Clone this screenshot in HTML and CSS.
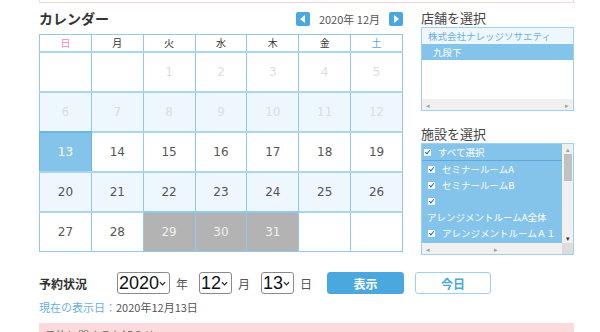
FILE: index.html
```html
<!DOCTYPE html>
<html lang="ja">
<head>
  <meta charset="UTF-8" />
  <meta name="viewport" content="width=device-width, initial-scale=1" />
  <title>予約状況</title>
  <link rel="stylesheet" href="styles.css">
</head>
<body>
  <div class="page">
    <div class="top-notice"></div>

    <div class="main">
      <div class="calendar">
        <div class="cal-head">
          <h2>カレンダー</h2>
          <div class="month-nav">
            <span class="nav-btn prev"></span>
            <span class="month-label">2020年 12月</span>
            <span class="nav-btn next"></span>
          </div>
        </div>
        <table class="cal-table">
          <thead>
            <tr>
              <th class="sun">日</th><th>月</th><th>火</th><th>水</th><th>木</th><th>金</th><th class="sat">土</th>
            </tr>
          </thead>
          <tbody>
            <tr>
              <td></td><td></td><td class="past">1</td><td class="past">2</td><td class="past">3</td><td class="past">4</td><td class="past">5</td>
            </tr>
            <tr class="alt">
              <td class="past">6</td><td class="past">7</td><td class="past">8</td><td class="past">9</td><td class="past">10</td><td class="past">11</td><td class="past">12</td>
            </tr>
            <tr>
              <td class="today">13</td><td>14</td><td>15</td><td>16</td><td>17</td><td>18</td><td>19</td>
            </tr>
            <tr class="alt">
              <td>20</td><td>21</td><td>22</td><td>23</td><td>24</td><td>25</td><td>26</td>
            </tr>
            <tr>
              <td>27</td><td>28</td><td class="closed">29</td><td class="closed">30</td><td class="closed">31</td><td></td><td></td>
            </tr>
          </tbody>
        </table>
      </div>

      <div class="side">
        <h3>店舗を選択</h3>
        <div class="listbox shop-list">
          <div class="list-body">
            <div class="opt company">株式会社ナレッジソサエティ</div>
            <div class="opt selected indent">九段下</div>
          </div>
          <div class="hscroll"><span>◂</span><span>▸</span></div>
        </div>

        <h3 class="facility-title">施設を選択</h3>
        <div class="listbox facility-list">
          <div class="fac-wrap">
            <div class="list-body">
              <div class="fac all"><span class="check"></span>すべて選択</div>
              <div class="fac"><span class="check"></span>セミナールームA</div>
              <div class="fac"><span class="check"></span>セミナールームB</div>
              <div class="fac"><span class="check"></span></div>
              <div class="fac plain">アレンジメントルームA全体</div>
              <div class="fac"><span class="check"></span>アレンジメントルームＡ１</div>
            </div>
            <div class="vscroll">
              <span class="arr">▴</span>
              <span class="thumb"></span>
              <span class="arr down">▾</span>
            </div>
          </div>
          <div class="hscroll"><span>◂</span><span>▸</span><i></i></div>
        </div>
      </div>
    </div>

    <div class="controls">
      <span class="ctrl-label">予約状況</span>
      <span class="select year">
        <select><option>2020</option></select>
        <svg class="chev" viewBox="0 0 8 5"><path d="M1 1l3 3 3-3" fill="none" stroke="#222" stroke-width="1.4"/></svg>
      </span>
      <span class="unit">年</span>
      <span class="select small">
        <select><option>12</option></select>
        <svg class="chev" viewBox="0 0 8 5"><path d="M1 1l3 3 3-3" fill="none" stroke="#222" stroke-width="1.4"/></svg>
      </span>
      <span class="unit">月</span>
      <span class="select small">
        <select><option>13</option></select>
        <svg class="chev" viewBox="0 0 8 5"><path d="M1 1l3 3 3-3" fill="none" stroke="#222" stroke-width="1.4"/></svg>
      </span>
      <span class="unit last">日</span>
      <button class="btn primary">表示</button>
      <button class="btn outline">今日</button>
    </div>
    <p class="current-date"><span>現在の表示日：</span>2020年12月13日</p>

    <div class="notice">予約に関するお知らせ</div>
  </div>
</body>
</html>
```

FILE: styles.css
```css
* {
  margin: 0;
  padding: 0;
  box-sizing: border-box;
}
body {
  font-family: 'Noto Sans CJK JP', sans-serif;
  background-color: #ffffff;
  color: #333333;
  width: 600px;
  height: 332px;
  overflow: hidden;
}
.page {
  padding-left: 39px;
  width: 574px;
}
.top-notice {
  height: 3px;
  border: 1px solid #f7d6d6;
  border-top: none;
}
.main {
  display: flex;
  gap: 18px;
}
.calendar {
  width: 364px;
}
.cal-head {
  display: flex;
  justify-content: space-between;
  align-items: center;
  height: 31px;
}
.cal-head h2 {
  font-size: 14px;
  font-weight: 700;
  color: #333333;
  margin-top: -2px;
}
.month-nav {
  display: flex;
  align-items: center;
  gap: 9px;
}
.month-label {
  font-size: 11px;
  color: #555555;
}
.nav-btn {
  position: relative;
  display: block;
  width: 14px;
  height: 14px;
  border-radius: 2px;
  background-color: #4aa8de;
}
.nav-btn::after {
  content: "";
  position: absolute;
  top: 3px;
  border-top: 4px solid transparent;
  border-bottom: 4px solid transparent;
}
.nav-btn.prev::after {
  left: 4px;
  border-right: 5px solid #ffffff;
}
.nav-btn.next::after {
  left: 5px;
  border-left: 5px solid #ffffff;
}
.cal-table {
  width: 364px;
  border-collapse: collapse;
  table-layout: fixed;
  border: 1px solid #8fc9ea;
}
.cal-table th {
  height: 17px;
  font-size: 10px;
  font-weight: 400;
  color: #333333;
  border: 1px solid #8fc9ea;
  border-bottom: 2px solid #a9d6f0;
}
.cal-table th.sun {
  color: #f28bb0;
}
.cal-table th.sat {
  color: #5fa9db;
}
.cal-table td {
  height: 40px;
  text-align: center;
  font-family: 'DejaVu Sans', sans-serif;
  font-size: 12px;
  color: #555555;
  border: 1px solid #8fc9ea;
  border-top: 2px solid #a9d6f0;
}
.cal-table tr.alt td {
  background-color: #eef7fd;
}
.cal-table td.past {
  color: #dddddd;
}
.cal-table td.today {
  background-color: #85c4ea;
  color: #ffffff;
  border-color: #6ab5e2;
}
.cal-table td.closed {
  background-color: #b3b3b3;
  color: #f0f0f0;
  border-color: #8fc9ea;
}
.side {
  width: 153px;
}
.side h3 {
  font-size: 13px;
  font-weight: 400;
  color: #444444;
  height: 24px;
  padding-top: 6px;
  line-height: 18px;
}
.side h3.facility-title {
  height: 32px;
  padding-top: 14px;
}
.listbox {
  border: 1px solid #9fd0ee;
  background: #ffffff;
  display: flex;
  flex-direction: column;
}
.shop-list {
  height: 84px;
}
.list-body {
  flex: 1;
  overflow: hidden;
}
.opt {
  height: 16px;
  line-height: 16px;
  font-size: 9.5px;
  padding-left: 6px;
  white-space: nowrap;
}
.opt.company {
  background-color: #eef7fd;
  color: #6ab0de;
}
.opt.selected {
  background-color: #85c4ea;
  color: #ffffff;
}
.opt.indent {
  padding-left: 11px;
}
.hscroll {
  height: 11px;
  background-color: #f0f0f0;
  display: flex;
  justify-content: space-between;
  align-items: center;
  padding: 0 4px;
  font-size: 7px;
  color: #a0a0a0;
}
.facility-list {
  height: 112px;
}
.facility-list .hscroll {
  padding-right: 0;
}
.facility-list .hscroll i {
  width: 11px;
  height: 11px;
  background-color: #dcdcdc;
}
.fac-wrap {
  flex: 1;
  display: flex;
  background-color: #85c4ea;
  overflow: hidden;
}
.fac {
  height: 16px;
  line-height: 16px;
  font-size: 9.5px;
  color: #ffffff;
  display: flex;
  align-items: center;
  gap: 7px;
  padding-left: 6px;
  white-space: nowrap;
}
.fac.all {
  padding-left: 2px;
  border-bottom: 1px solid #5ea9da;
  height: 17px;
}
.fac.plain {
  padding-left: 5px;
}
.check {
  position: relative;
  display: block;
  width: 7px;
  height: 7px;
  background-color: #ffffff;
  border-radius: 1px;
}
.check::after {
  content: "";
  position: absolute;
  left: 2px;
  top: 0;
  width: 2px;
  height: 4px;
  border-right: 1.5px solid #1a6fd1;
  border-bottom: 1.5px solid #1a6fd1;
  transform: rotate(40deg);
}
.vscroll {
  width: 11px;
  background-color: #f0f0f0;
  display: flex;
  flex-direction: column;
  align-items: center;
  font-size: 7px;
  color: #a0a0a0;
}
.vscroll .arr {
  height: 10px;
  line-height: 10px;
}
.vscroll .arr.down {
  margin-top: auto;
  color: #333333;
}
.vscroll .thumb {
  width: 8px;
  height: 27px;
  background-color: #c1c1c1;
}
.controls {
  display: flex;
  align-items: center;
  margin-top: 17px;
  height: 22px;
}
.ctrl-label {
  font-size: 12px;
  font-weight: 700;
  color: #333333;
  width: 78px;
}
.select {
  position: relative;
  display: flex;
  align-items: center;
  height: 22px;
  border: 1px solid #8a8a8a;
  border-radius: 3px;
  background-color: #ffffff;
}
.select.year {
  width: 53px;
}
.select.small {
  width: 33px;
}
.select select {
  appearance: none;
  -webkit-appearance: none;
  border: none;
  outline: none;
  background: transparent;
  font-family: 'Liberation Sans', sans-serif;
  font-size: 18px;
  color: #111111;
  padding: 0 0 0 1px;
  width: 100%;
  height: 20px;
  line-height: 20px;
}
.select .chev {
  position: absolute;
  right: 3px;
  top: 8px;
  width: 7px;
  height: 5px;
  pointer-events: none;
}
.unit {
  font-size: 12px;
  color: #555555;
  margin: 0 11px 0 6px;
}
.unit.last {
  margin-right: 15px;
}
.btn {
  height: 22px;
  border-radius: 3px;
  font-family: 'Noto Sans CJK JP', sans-serif;
  font-size: 12px;
  font-weight: 700;
  cursor: pointer;
}
.btn.primary {
  width: 77px;
  background-color: #4aa8de;
  border: 1px solid #4aa8de;
  color: #ffffff;
}
.btn.outline {
  width: 76px;
  margin-left: 11px;
  background-color: #ffffff;
  border: 1px solid #9fd0ee;
  color: #4aa8de;
}
.current-date {
  font-size: 11px;
  color: #555555;
  margin-top: 5px;
  line-height: 16px;
}
.current-date span {
  color: #6ab0de;
}
.notice {
  margin-top: 8px;
  width: 535px;
  background-color: #fcd9dc;
  font-size: 11px;
  color: #666666;
  padding: 4px 6px;
  height: 30px;
}
```
